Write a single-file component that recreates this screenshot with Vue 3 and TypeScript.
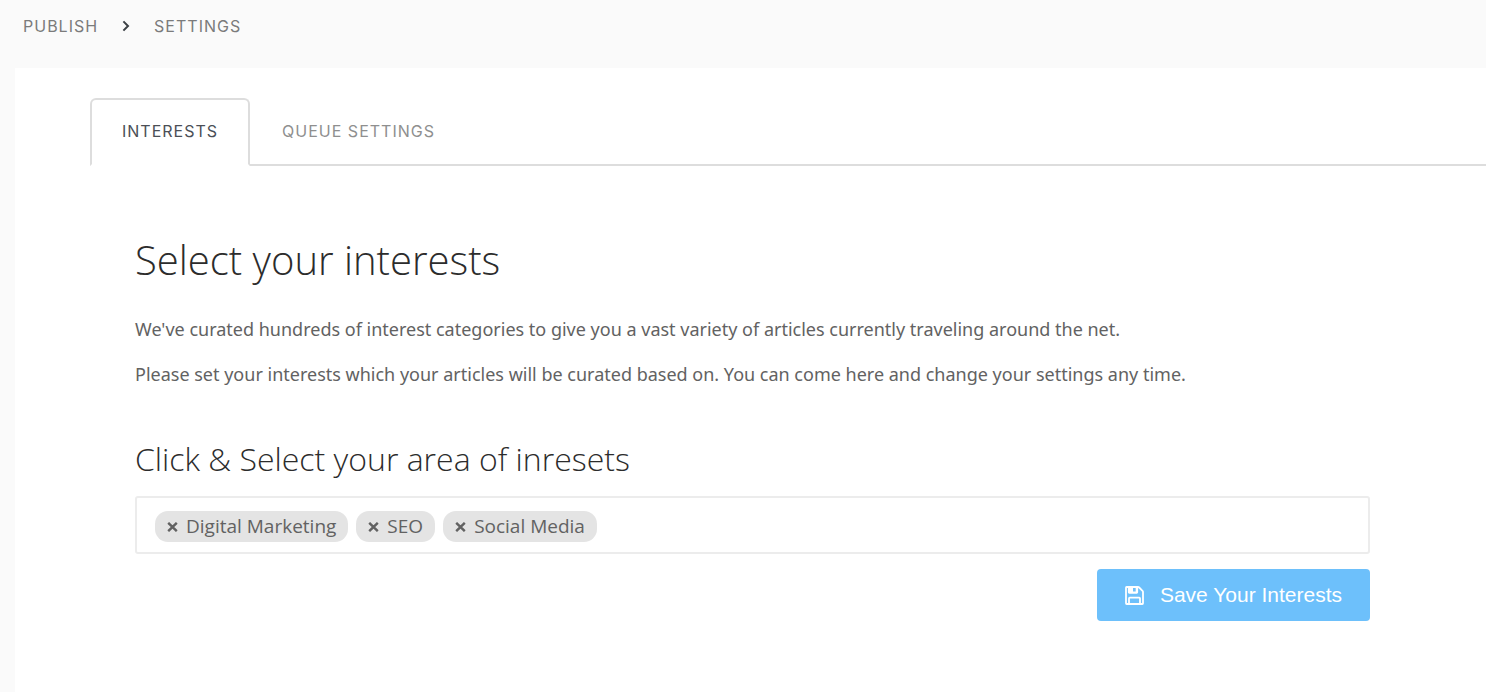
<script setup lang="ts">
import { ref } from 'vue'

interface Tab {
  id: string
  label: string
}

const tabs: Tab[] = [
  { id: 'interests', label: 'INTERESTS' },
  { id: 'queue', label: 'QUEUE SETTINGS' },
]
const activeTab = ref('interests')
const interests = ref<string[]>(['Digital Marketing', 'SEO', 'Social Media'])

function removeInterest(name: string): void {
  interests.value = interests.value.filter((item) => item !== name)
}
</script>

<template>
  <div class="page">
    <nav class="breadcrumb" aria-label="Breadcrumb">
      <a href="#publish">PUBLISH</a>
      <svg class="chevron" viewBox="0 0 8 12" aria-hidden="true">
        <path d="M1.400 1.400 6 6l-4.600 4.600" />
      </svg>
      <a href="#settings">SETTINGS</a>
    </nav>

    <main class="card">
      <div class="tabs" role="tablist">
        <button
          v-for="tab in tabs"
          :key="tab.id"
          type="button"
          role="tab"
          class="tab"
          :class="{ active: tab.id === activeTab }"
          :aria-selected="tab.id === activeTab"
          @click="activeTab = tab.id"
        >
          {{ tab.label }}
        </button>
      </div>

      <section class="panel">
        <h1>Select your interests</h1>
        <p>We've curated hundreds of interest categories to give you a vast variety of articles currently traveling around the net.</p>
        <p>Please set your interests which your articles will be curated based on. You can come here and change your settings any time.</p>

        <h2><label for="interest-search">Click &amp; Select your area of inresets</label></h2>
        <div class="select-box">
          <span v-for="item in interests" :key="item" class="tag">
            <button type="button" class="remove" :aria-label="`Remove ${item}`" @click="removeInterest(item)">
              <svg viewBox="0 0 11 10" aria-hidden="true">
                <path d="M1.200 .8 9.800 9.200M9.800 .8 1.200 9.200" />
              </svg>
            </button>
            {{ item }}
          </span>
          <input id="interest-search" class="search" type="text" autocomplete="off" />
        </div>

        <div class="actions">
          <button type="button" class="save">
            <svg viewBox="0 0 19 19" aria-hidden="true">
              <path class="outline" d="M1.500 1h11.500q.7 0 1.200.5l3.300 3.300q.5.500.5 1.200v11.300q0 .7-.7.700h-15.600q-.7 0-.7-.7v-15.600q0-.7.500-.7z" />
              <path class="outline" d="M4 18v-5.600q0-.7.700-.7h9.600q.7 0 .7.700V18M3.800 1v5.300q0 .5.500.5h7.400q.5 0 .5-.5V1" />
              <path class="solid" d="M3 1h5v5.800H3zM10.700 1H12v5.800H8V5.600h2.700z" />
            </svg>
            <span>Save Your Interests</span>
          </button>
        </div>
      </section>
    </main>
  </div>
</template>

<style>
body {
  background: #fafafa;
}
</style>

<style scoped>
.page {
  min-height: 100vh;
  display: flex;
  flex-direction: column;
  font-family: "Noto Sans", "Open Sans", sans-serif;
  color: #626262;
}

.breadcrumb {
  display: flex;
  align-items: center;
  gap: 24px;
  padding: 14px 23px 30px;
  font-family: Inter, "Liberation Sans", sans-serif;
  font-size: 16px;
  line-height: 24px;
  letter-spacing: 1px;
}

.breadcrumb a {
  color: #7b7b7b;
  text-decoration: none;
}

.chevron {
  width: 8px;
  height: 12px;
  fill: none;
  stroke: #3b4045;
  stroke-width: 2;
}

.card {
  flex: 1;
  margin-left: 15px;
  padding: 30px 0 71px 75px;
  background: #fff;
}

.tabs {
  display: flex;
  border-bottom: 2px solid #ddd;
}

.tab {
  margin-bottom: -2px;
  padding: 20px 30px 22px;
  border: 2px solid transparent;
  border-radius: 6px 6px 0 0;
  background: transparent;
  font-family: Inter, "Liberation Sans", sans-serif;
  font-size: 16px;
  line-height: 22px;
  letter-spacing: 1px;
  color: #8f8f8f;
  cursor: pointer;
}

.tab.active {
  border-color: #ddd;
  border-bottom-color: #fff;
  background: #fff;
  color: #4b4f56;
}

.panel {
  padding: 64px 116px 0 45px;
}

h1,
h2 {
  margin: 0;
  font-family: "Open Sans", "Noto Sans", sans-serif;
  font-weight: 300;
  color: #2c2c2c;
}

h1 {
  font-size: 40px;
  line-height: 60px;
  margin-bottom: 24px;
}

h2 {
  font-size: 32px;
  line-height: 48px;
  margin: 46px 0 13px;
}

p {
  margin: 0 0 15px;
  font-size: 18px;
  line-height: 30px;
}

.select-box {
  display: flex;
  flex-wrap: wrap;
  gap: 8px;
  padding: 13px 18px 10px;
  border: 2px solid #ececec;
  border-radius: 3px;
  background: #fff;
}

.tag {
  display: inline-flex;
  align-items: center;
  gap: 8px;
  padding: 0 12px;
  border-radius: 13px;
  background: #e4e4e4;
  font-family: "Open Sans", "Noto Sans", sans-serif;
  font-size: 19px;
  line-height: 31px;
}

.remove {
  display: flex;
  padding: 0;
  border: 0;
  background: none;
  cursor: pointer;
}

.remove svg {
  width: 11px;
  height: 10px;
  fill: none;
  stroke: #626262;
  stroke-width: 2.4;
}

.search {
  flex: 1;
  min-width: 40px;
  padding: 0;
  border: 0;
  outline: 0;
  background: transparent;
  font: inherit;
  color: inherit;
}

.actions {
  display: flex;
  justify-content: flex-end;
  margin-top: 15px;
}

.save {
  display: flex;
  align-items: center;
  gap: 16px;
  padding: 13px 28px;
  border: 0;
  border-radius: 4px;
  background: #6dc0fb;
  color: #fff;
  font-family: "Liberation Sans", Arial, sans-serif;
  font-size: 21px;
  line-height: 26px;
  cursor: pointer;
}

.save svg {
  width: 19px;
  height: 19px;
}

.outline {
  fill: none;
  stroke: #fff;
  stroke-width: 1.8;
}

.solid {
  fill: #fff;
}
</style>
